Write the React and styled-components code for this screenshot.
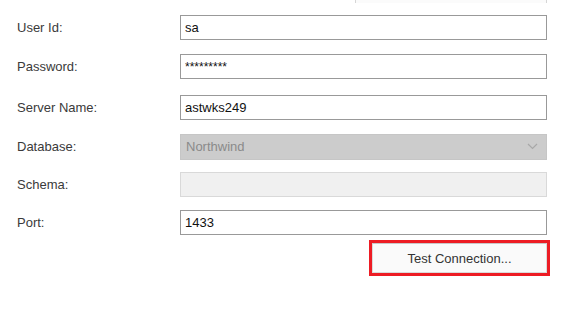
import React from 'react';
import styled, { createGlobalStyle } from 'styled-components';

const GlobalStyle = createGlobalStyle`
  html, body {
    margin: 0;
    padding: 0;
    background: #fff;
  }
  body {
    font-family: "Liberation Sans", Arial, sans-serif;
    overflow: hidden;
  }
`;

const Page = styled.div`
  width: 572px;
  height: 312px;
  overflow: hidden;
  background: #fff;
`;

const TopStrip = styled.div`
  height: 3px;
  display: flex;
  justify-content: flex-end;
  padding-right: 25px;
  overflow: hidden;
`;

const ClippedButton = styled.div`
  width: 190px;
  height: 3px;
  border: 1px solid #d6d6d6;
  border-top: none;
  background: #fbfbfb;
`;

const Form = styled.div`
  display: flex;
  flex-direction: column;
  padding-left: 17px;
`;

const Row = styled.div`
  display: flex;
  align-items: center;
  height: 25px;
  margin-top: ${p => p.$top}px;
`;

const Label = styled.div`
  width: 163px;
  font-size: 13px;
  color: #3a3a3a;
`;

const TextBox = styled.input`
  box-sizing: border-box;
  width: 367px;
  height: 25px;
  margin: 0;
  padding: 0 4px;
  border: 1px solid #999;
  border-radius: 0;
  outline: none;
  background: ${p => (p.disabled ? '#f0f0f0' : '#fff')};
  border-color: ${p => (p.disabled ? '#d9d9d9' : '#999')};
  font-family: "Liberation Sans", Arial, sans-serif;
  font-size: ${p => (p.$small ? '12px' : '13px')};
  color: #111;
`;

const Combo = styled.div`
  box-sizing: border-box;
  width: 367px;
  height: 26px;
  display: flex;
  align-items: center;
  justify-content: space-between;
  padding: 0 8px 0 5px;
  background: #cccccc;
  border: 1px solid #c6c6c6;
  font-size: 13px;
  color: #8a8a8a;
`;

const ButtonRow = styled.div`
  display: flex;
  justify-content: flex-end;
  padding-right: 25px;
  margin-top: 8px;
`;

const TestButton = styled.button`
  box-sizing: border-box;
  width: 175px;
  height: 30px;
  margin: 0;
  border: 1px solid #dadada;
  border-top-color: #c8c8c8;
  border-radius: 0;
  background: #fafafa;
  outline: 3px solid #ed1c24;
  outline-offset: 0;
  font-family: "Liberation Sans", Arial, sans-serif;
  font-size: 13px;
  color: #333;
  padding: 0;
`;

const Chevron = () => (
  <svg width="11" height="7" viewBox="0 0 11 7">
    <path d="M1 1 L5.5 5.5 L10 1" fill="none" stroke="#a8a8a8" strokeWidth="1.2" />
  </svg>
);

const fields = [
  { label: 'User Id:', value: 'sa', top: 12 },
  { label: 'Password:', value: '*********', top: 14, small: true },
  { label: 'Server Name:', value: 'astwks249', top: 16 }
];

export default function App() {
  return (
    <Page>
      <GlobalStyle />
      <TopStrip>
        <ClippedButton />
      </TopStrip>
      <Form>
        {fields.map(f => (
          <Row key={f.label} $top={f.top}>
            <Label>{f.label}</Label>
            <TextBox readOnly value={f.value} $small={f.small} />
          </Row>
        ))}
        <Row $top={14}>
          <Label>Database:</Label>
          <Combo>
            <span>Northwind</span>
            <Chevron />
          </Combo>
        </Row>
        <Row $top={13}>
          <Label>Schema:</Label>
          <TextBox readOnly value="" disabled />
        </Row>
        <Row $top={13}>
          <Label>Port:</Label>
          <TextBox readOnly value="1433" />
        </Row>
      </Form>
      <ButtonRow>
        <TestButton>Test Connection...</TestButton>
      </ButtonRow>
    </Page>
  );
}
